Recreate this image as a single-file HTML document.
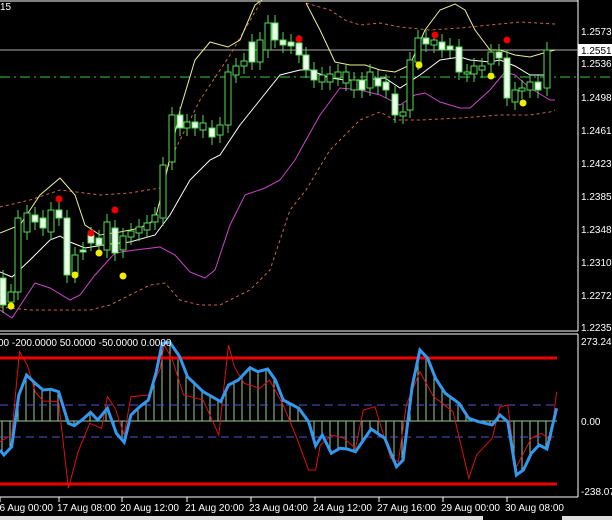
<!DOCTYPE html>
<html><head><meta charset="utf-8"><style>
html,body{margin:0;padding:0;background:#000;width:612px;height:520px;overflow:hidden}
svg{display:block}
text{font-family:"Liberation Sans",sans-serif;font-size:10px;fill:#fff}
</style></head><body>
<svg id="s" width="612" height="520" xmlns="http://www.w3.org/2000/svg">
<rect width="612" height="520" fill="#000"/>
<line x1="0" y1="1" x2="578" y2="1" stroke="#fff"/>
<line x1="578" y1="0" x2="578" y2="331" stroke="#fff"/>
<line x1="0" y1="331" x2="578" y2="331" stroke="#fff"/>
<line x1="0" y1="334" x2="578" y2="334" stroke="#fff"/>
<line x1="578" y1="334" x2="578" y2="497" stroke="#fff"/>
<line x1="0" y1="497" x2="578" y2="497" stroke="#fff"/>
<line x1="0" y1="50" x2="578" y2="50" stroke="#aaa"/>
<line x1="0" y1="77" x2="612" y2="77" stroke="#3c3" stroke-dasharray="10,4,2,4"/>
<text x="0" y="10">15</text>
<g id="g"></g>
<g>
<text x="581" y="35">1.2573</text>
<rect x="578" y="44" width="34" height="12" fill="#fff"/>
<text x="581" y="54" style="fill:#000">1.2551</text>
<text x="581" y="67">1.2536</text>
<text x="581" y="101">1.2498</text>
<text x="581" y="134">1.2461</text>
<text x="581" y="167">1.2423</text>
<text x="581" y="200">1.2385</text>
<text x="581" y="233">1.2348</text>
<text x="581" y="266">1.2310</text>
<text x="581" y="299">1.2272</text>
<text x="581" y="331">1.2235</text>
<text x="581" y="345">273.241</text>
<text x="581" y="425">0.00</text>
<text x="581" y="495">-238.07</text>
<text x="-2" y="346">00 -200.0000 50.0000 -50.0000 0.0000</text>
</g>
<g id="t"></g>
<rect x="0" y="516" width="483" height="4" fill="#ddd"/>
<rect x="562" y="516" width="50" height="4" fill="#ddd"/>
</svg>
<script>
var g=document.getElementById('g'),h='';
function pl(p,c,w,d){h+='<polyline fill="none" stroke="'+c+'" stroke-width="'+w+'"'+(d?' stroke-dasharray="'+d+'"':'')+' points="'+p.map(function(a){return a[0]+','+a[1]}).join(' ')+'"/>';}
function ln(x1,y1,x2,y2,c,w){h+='<line x1="'+x1+'" y1="'+y1+'" x2="'+x2+'" y2="'+y2+'" stroke="'+c+'" stroke-width="'+(w||1)+'"/>';}
pl([[0,207],[30,200],[60,190],[100,195],[130,193],[160,188],[175,150],[200,100],[230,55],[262,0]],'#c64','1','3,3');
pl([[306,3],[330,10],[345,20],[360,25],[380,23],[400,27],[430,30],[460,28],[490,25],[520,22],[555,24]],'#c64','1','3,3');
pl([[0,307],[30,310],[60,310],[90,310],[110,305],[150,285],[165,283],[180,300],[200,305],[220,305],[250,290],[270,270],[290,210],[306,190],[330,150],[360,120],[380,112],[395,120],[420,120],[460,118],[500,115],[530,115],[550,112],[555,110]],'#c64','1','3,3');
pl([[0,233],[20,225],[40,195],[60,178],[75,195],[85,225],[100,235],[120,232],[140,228],[155,220],[165,180],[180,110],[195,60],[210,42],[228,47],[240,40],[255,5],[262,0]],'#ee9','1');
pl([[306,3],[320,30],[335,62],[350,65],[365,65],[380,70],[395,72],[410,65],[425,30],[440,10],[455,4],[465,10],[475,30],[490,50],[500,50],[515,55],[530,57],[547,52],[555,50]],'#ee9','1');
pl([[0,272],[12,277],[30,260],[50,240],[60,236],[70,242],[85,248],[110,244],[130,242],[155,235],[170,215],[190,180],[210,160],[220,155],[240,125],[260,100],[280,75],[300,70],[310,70],[330,78],[345,80],[365,80],[385,78],[400,88],[420,75],[440,60],[460,57],[470,60],[490,62],[500,60],[515,66],[530,75],[547,75]],'#fff','1');
pl([[0,310],[12,318],[35,283],[50,288],[70,300],[80,295],[95,275],[115,253],[135,250],[160,247],[175,255],[190,272],[205,278],[215,270],[230,225],[245,195],[265,188],[280,180],[295,160],[306,140],[320,115],[340,88],[360,90],[380,95],[400,105],[415,95],[425,93],[440,102],[460,108],[470,108],[490,90],[505,72],[515,75],[530,88],[550,100],[555,100]],'#c4c','1');
var C=[[3,278,305,1],[11,292,302,0],[18,218,292,0],[27,213,232,0],[35,215,222,1],[43,218,228,1],[51,210,232,0],[59,210,218,1],[67,218,275,1],[75,255,275,0],[83,250,252,1],[91,235,243,1],[99,238,245,1],[107,222,250,0],[115,228,253,1],[123,236,250,0],[131,231,237,0],[139,227,233,0],[147,223,230,0],[155,215,222,0],[163,165,218,0],[172,115,162,0],[180,115,128,1],[187,122,128,0],[195,122,128,1],[203,123,130,0],[212,128,137,1],[220,125,135,0],[228,72,125,0],[236,66,75,0],[244,61,66,0],[252,42,62,1],[260,40,62,0],[268,23,50,0],[275,23,40,1],[283,40,45,1],[291,42,46,1],[299,43,55,1],[306,55,70,1],[314,70,80,1],[322,75,82,0],[330,74,82,0],[338,72,78,0],[346,72,83,0],[354,80,90,0],[362,80,90,1],[370,72,88,0],[378,78,86,1],[386,82,90,1],[395,94,115,1],[403,112,116,0],[410,60,110,0],[418,38,62,0],[426,38,44,1],[434,40,45,0],[442,42,50,1],[450,46,50,1],[459,47,72,1],[467,72,74,0],[474,66,74,0],[482,66,70,0],[491,52,64,0],[499,52,58,1],[507,58,98,1],[515,90,102,0],[522,88,91,0],[530,82,90,0],[538,82,90,1],[547,50,88,0]];
C.forEach(function(c){var x=c[0];ln(x,c[1]-8,x,c[2]+8,'#5d5');h+='<rect x="'+(x-3)+'" y="'+c[1]+'" width="6" height="'+Math.max(2,c[2]-c[1])+'" fill="'+(c[3]?'#efe':'#000')+'" stroke="#5d5"/>';});
[[59,199],[91,233],[115,210],[299,39],[435,35],[507,40]].forEach(function(d){h+='<circle cx="'+d[0]+'" cy="'+d[1]+'" r="3.5" fill="#e00"/>';});
[[11,306],[75,275],[99,253],[123,276],[419,65],[491,76],[523,103]].forEach(function(d){h+='<circle cx="'+d[0]+'" cy="'+d[1]+'" r="3.5" fill="#ee0"/>';});
function cv(a){return a.map(function(p){return [+(p[0]/2.56).toFixed(1),+(325+p[1]/3).toFixed(1)]});}
var B=cv([[0,375],[10,390],[30,365],[48,210],[68,150],[90,175],[110,195],[130,193],[150,200],[175,295],[190,302],[210,285],[232,262],[250,285],[275,250],[298,325],[318,352],[335,270],[358,245],[380,225],[400,140],[415,55],[435,52],[460,95],[480,155],[520,200],[565,230],[585,180],[610,165],[640,128],[660,140],[685,132],[705,165],[725,225],[765,250],[790,290],[808,362],[825,330],[848,385],[870,370],[888,372],[910,380],[950,312],[985,340],[1015,425],[1032,405],[1055,185],[1075,75],[1095,100],[1115,160],[1140,205],[1175,235],[1200,280],[1225,290],[1260,300],[1280,270],[1300,290],[1322,450],[1340,435],[1360,385],[1380,360],[1400,372],[1425,250]]);
var R=cv([[0,350],[30,330],[50,80],[70,120],[90,200],[110,228],[150,230],[175,490],[200,380],[230,295],[260,310],[275,215],[295,250],[318,330],[335,215],[380,210],[410,130],[420,60],[440,100],[470,210],[520,225],[560,330],[585,60],[600,125],[625,175],[665,190],[690,165],[725,240],[760,340],[790,435],[808,435],[820,360],[850,330],[880,340],[910,370],[930,255],[960,245],[1000,400],[1020,410],[1040,240],[1075,140],[1110,215],[1160,260],[1200,460],[1220,390],[1260,340],[1280,245],[1300,240],[1320,430],[1360,340],[1385,325],[1410,345],[1425,200]]);
function at(x){for(var i=1;i<B.length;i++){if(B[i][0]>=x){var a=B[i-1],b=B[i];return a[1]+(b[1]-a[1])*(x-a[0])/(b[0]-a[0]);}}return 421;}
ln(0,421,557,421,'#9c9');
for(var x=2;x<557;x+=8){ln(x,421,x,at(x),'#9c9');}
ln(0,405,557,405,'#55c',1);ln(0,437,557,437,'#55c',1);
h=h.replace(/(<line x1="0" y1="(405|437)"[^>]*)\/>/g,'$1 stroke-dasharray="8,5"/>');
ln(0,358,557,358,'#e00',3);ln(0,484,557,484,'#e00',3);
pl(R,'#d11','1');
pl(B,'#39e','3');
g.innerHTML=h;
var t='',L=[['16 Aug 00:00',0],['17 Aug 08:00',59],['20 Aug 12:00',122],['21 Aug 20:00',187],['23 Aug 04:00',251],['24 Aug 12:00',315],['27 Aug 16:00',379],['29 Aug 00:00',443],['30 Aug 08:00',507]];
L.forEach(function(l,i){t+='<line x1="'+l[1]+'" y1="497" x2="'+l[1]+'" y2="502" stroke="#fff"/><text x="'+(i?l[1]-2:-6)+'" y="511">'+l[0]+'</text>';});
document.getElementById('t').innerHTML=t;
</script>
</body></html>
